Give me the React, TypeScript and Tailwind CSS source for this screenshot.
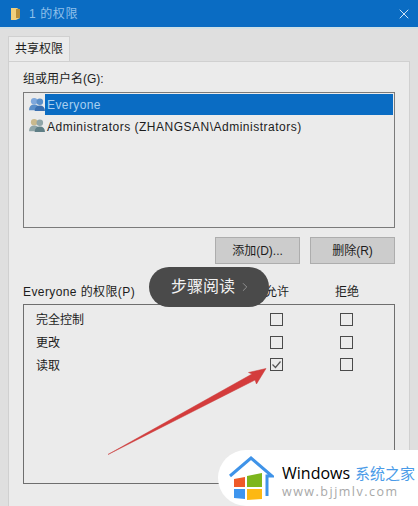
import { ChevronRight, X } from "lucide-react"

const font = "font-['Liberation_Sans','Noto_Sans_CJK_SC',sans-serif]"

function Users({ dim }: { dim?: boolean }) {
  const a = dim ? "#8fa5a8" : "#5b8fc9"
  const b = dim ? "#5f7f86" : "#3a6fb0"
  const c = dim ? "#c9b98d" : "#7fa8dc"
  return (
    <svg width="16" height="15" viewBox="0 0 17 16" className="shrink-0">
      <circle cx="5.5" cy="4.5" r="3.5" fill={c} />
      <path d="M0 14c0-4 2-6 5.5-6S11 10 11 14z" fill={a} />
      <circle cx="11.5" cy="5" r="3.5" fill={a} />
      <path d="M6 15c0-4 2-6 5.5-6s5.5 2 5.5 6z" fill={b} />
    </svg>
  )
}

function Box({ checked }: { checked?: boolean }) {
  return (
    <div className="w-[13px] h-[13px] border border-[#4a4a4a] flex items-center justify-center">
      {checked && (
        <svg width="11" height="11" viewBox="0 0 11 11">
          <path d="M1.5 5.5 4.5 8.5 9.5 2.5" fill="none" stroke="#555" strokeWidth="1.2" />
        </svg>
      )}
    </div>
  )
}

const rows = [
  { name: "完全控制", allow: false },
  { name: "更改", allow: false },
  { name: "读取", allow: true },
]

export default function App() {
  return (
    <div className={`${font} relative w-[418px] h-[506px] overflow-hidden bg-[#dfdfdf] text-[12px] text-[#1c1c1c]`}>
      {/* title bar */}
      <div className="h-[27px] bg-[#0a6cc3] flex items-center pl-[11px] pr-[6px] text-[#8fc0ea]">
        <svg width="9" height="13" viewBox="0 0 9 13" className="shrink-0">
          <path d="M0 1h6l3 2v8l-4 2H0z" fill="#f0cf7c" />
          <path d="M5 2h4v9H5z" fill="#b98f3a" />
        </svg>
        <span className="ml-[9px] text-[12px] tracking-[0.6px]">1 的权限</span>
        <X className="ml-auto w-[16px] h-[16px] text-[#cfe4f6]" strokeWidth={1.5} />
      </div>
      <div className="h-[2px] bg-[#cfe0e6]" />

      <div className="pl-[8px] pr-[8px]">
        {/* tab */}
        <div className="mt-[7px] w-[62px] h-[25px] bg-[#ebebeb] border border-b-0 border-[#d0d0d0] flex items-center justify-center">
          共享权限
        </div>

        {/* panel */}
        <div className="h-[450px] bg-[#ebebeb] border border-[#d0d0d0] px-[14px] pt-[7px]">
          <div className="h-[20px] leading-[20px]">组或用户名(G):</div>
          <div className="mt-[3px] h-[136px] border border-[#7a7a7a] p-px">
            <div className="h-[21px] flex items-center pl-[4px]">
              <Users />
              <span className="h-[21px] leading-[23px] flex-1 pl-[2px] bg-[#0a6cc3] text-[#a9d0f0] tracking-[0.4px] text-[12px]">Everyone</span>
            </div>
            <div className="h-[21px] flex items-center pl-[4px]">
              <Users dim />
              <span className="ml-[2px] pt-[2px] tracking-[0.5px]">Administrators (ZHANGSAN\Administrators)</span>
            </div>
          </div>

          <div className="mt-[9px] flex justify-end gap-[10px]">
            <button className="w-[85px] h-[27px] bg-[#cccccc] border border-[#adadad]">添加(D)...</button>
            <button className="w-[85px] h-[27px] bg-[#cccccc] border border-[#adadad]">删除(R)</button>
          </div>

          <div className="mt-[20px] h-[16px] flex items-center">
            <span className="tracking-[0.4px]">Everyone 的权限(P)</span>
            <span className="ml-auto w-[70px] text-center">允许</span>
            <span className="w-[70px] mr-[13px] text-center">拒绝</span>
          </div>
          <div className="mt-[4px] h-[180px] border border-[#6e6e6e] pt-[3px]">
            {rows.map((r) => (
              <div key={r.name} className="h-[22.7px] flex items-center pl-[12px]">
                <span className="pt-[2px]">{r.name}</span>
                <div className="ml-auto mr-[41px] flex gap-[57px]">
                  <Box checked={r.allow} />
                  <Box />
                </div>
              </div>
            ))}
          </div>
        </div>
      </div>

      {/* step reading pill */}
      <div className="absolute left-[149px] top-[267px] w-[120px] h-[40px] rounded-[20px] bg-[#4a4a4a] flex items-center pl-[22px] text-white text-[16px]">
        <span className="text-[#f2f2f2]">步骤阅读</span>
        <ChevronRight className="ml-[3px] w-[14px] h-[14px] text-[#9a9a9a]" strokeWidth={1.5} />
      </div>

      {/* red arrow */}
      <svg className="absolute left-[100px] top-[360px]" width="175" height="100" viewBox="100 360 175 100">
        <path d="M108 454.5 252 374 248.5 372.5 266 368.5 256.5 384 255 380 Z" fill="#d43c3c" stroke="#c93a3a" strokeWidth="0.5" />
      </svg>

      {/* watermark */}
      <div className="absolute left-[218px] top-[450px] w-[200px] h-[56px] bg-white rounded-l-[28px] flex items-center pl-[10px]">
        <svg width="46" height="46" viewBox="0 0 46 46" className="shrink-0">
          <path d="M2 21 23 3 44 21 H39 V41" fill="none" stroke="#3f93e8" strokeWidth="3" />
          <path d="M6 24 17 22 V32 H6z" fill="#ef5a28" />
          <path d="M19 21 34 18 V32 H19z" fill="#7db61c" />
          <path d="M6 34 H17 V44 L6 43z" fill="#3e95ee" />
          <path d="M19 34 H34 V44 L19 45z" fill="#fdb813" />
        </svg>
        <div className="ml-[8px] mt-[3px] flex flex-col whitespace-nowrap">
          <div className="flex items-baseline h-[23px]">
            <span className="text-[16px] font-medium text-black font-['Open_Sans',sans-serif]">Windows</span>
            <span className="ml-[5px] text-[15px] text-[#4a9be8]">系统之家</span>
          </div>
          <span className="text-[12.5px] leading-[15px] tracking-[1.5px] text-[#a8a8a8] font-['Open_Sans',sans-serif]">www.bjjmlv.com</span>
        </div>
      </div>
    </div>
  )
}
